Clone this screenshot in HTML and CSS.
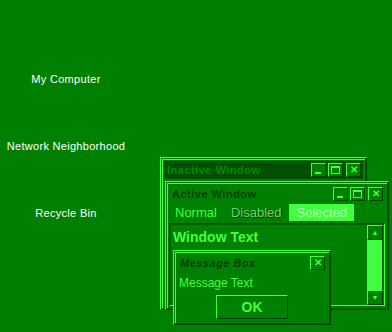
FILE: index.html
```html
<!DOCTYPE html>
<html lang="en">
<head>
    <meta charset="UTF-8">
    <title>Appearance</title>
    <link rel="stylesheet" href="styles.css">
</head>
<body>
    <div class="desktop">
        <!-- Iconos del escritorio -->
        <div class="icons">
            <div class="icon-label">My Computer</div>
            <div class="icon-label">Network Neighborhood</div>
            <div class="icon-label">Recycle Bin</div>
        </div>

        <!-- Ventana inactiva -->
        <div class="window inactive-window">
            <div class="title-bar inactive">
                <span class="title">Inactive Window</span>
                <div class="caption-buttons">
                    <span class="cap-btn min"><i></i></span>
                    <span class="cap-btn max"><i></i></span>
                    <span class="cap-btn close">&#x2715;</span>
                </div>
            </div>
        </div>

        <!-- Ventana activa -->
        <div class="window active-window">
            <div class="title-bar active">
                <span class="title">Active Window</span>
                <div class="caption-buttons">
                    <span class="cap-btn min"><i></i></span>
                    <span class="cap-btn max"><i></i></span>
                    <span class="cap-btn close">&#x2715;</span>
                </div>
            </div>
            <div class="menu">
                <span class="menu-item">Normal</span>
                <span class="menu-item disabled">Disabled</span>
                <span class="menu-item selected">Selected</span>
            </div>
            <div class="text-area">
                <div class="window-text">Window Text</div>
                <div class="scrollbar">
                    <span class="scroll-btn">&#x25B2;</span>
                    <span class="thumb"></span>
                    <span class="scroll-btn">&#x25BC;</span>
                </div>
            </div>
        </div>

        <!-- Caja de mensaje -->
        <div class="window message-box">
            <div class="title-bar msg">
                <span class="title">Message Box</span>
                <span class="cap-btn close">&#x2715;</span>
            </div>
            <div class="message-text">Message Text</div>
            <div class="ok-row">
                <button class="ok-button">OK</button>
            </div>
        </div>
    </div>
</body>
</html>
```

FILE: styles.css
```css
* {
    margin: 0;
    padding: 0;
    box-sizing: border-box;
}

body {
    width: 392px;
    height: 332px;
    overflow: hidden;
    background-color: #008000; /* Fondo verde */
    font-family: 'Liberation Sans', Arial, sans-serif;
    font-size: 11px;
}

.desktop {
    position: relative;
    width: 392px;
    height: 332px;
}

/* Iconos */
.icons {
    width: 132px;
    padding-top: 73px;
    display: flex;
    flex-direction: column;
    align-items: center;
    gap: 54px;
}

.icon-label {
    color: #ffffff;
    font-size: 11px;
    line-height: 13px;
    letter-spacing: 0.3px;
}

/* Ventanas */
.window {
    position: absolute;
    background-color: #008000;
    border: 1px solid;
    border-color: #40ff40 #004000 #004000 #40ff40;
    box-shadow: inset 1px 1px 0 #008000, inset -1px -1px 0 #006000, inset 2px 2px 0 #40ff40;
    padding: 3px;
}

.inactive-window {
    left: 160px;
    top: 157px;
    width: 207px;
    height: 153px;
}

.active-window {
    left: 165px;
    top: 181px;
    width: 224px;
    height: 129px;
    display: flex;
    flex-direction: column;
}

.message-box {
    left: 173px;
    top: 250px;
    width: 158px;
    height: 75px;
}

.title-bar {
    height: 18px;
    display: flex;
    align-items: center;
    justify-content: space-between;
    padding: 0 2px 0 3px;
}

.title {
    font-weight: bold;
    font-size: 11px;
    letter-spacing: 0.5px;
}

.title-bar.inactive {
    background-color: #005000;
}

.title-bar.inactive .title {
    color: #008800;
}

.title-bar.active .title,
.title-bar.msg .title {
    color: #004000;
}

.title-bar.msg .title {
    font-style: italic;
}

.caption-buttons {
    display: flex;
    gap: 2px;
}

.cap-btn {
    width: 15px;
    height: 14px;
    background-color: #008000;
    border: 1px solid;
    border-color: #40ff40 #004000 #004000 #40ff40;
    color: #40ff40;
    display: flex;
    align-items: center;
    justify-content: center;
    font-size: 10px;
    font-weight: bold;
    line-height: 1;
}

.cap-btn.close {
    margin-left: 1px;
}

.cap-btn.min i {
    width: 6px;
    height: 2px;
    background-color: #40ff40;
    margin-top: 6px;
    margin-right: 2px;
}

.cap-btn.max i {
    width: 9px;
    height: 8px;
    border: 1px solid #40ff40;
    border-top-width: 2px;
}

/* Menu */
.menu {
    display: flex;
    height: 18px;
    align-items: stretch;
    font-size: 13px;
    padding-top: 1px;
}

.menu-item {
    padding: 0 7px;
    display: flex;
    align-items: center;
    color: #40ff40;
}

.menu-item:first-child {
    padding-left: 6px;
}

.menu-item.disabled {
    color: #70d070;
    text-shadow: 1px 1px 0 #004000;
}

.menu-item.selected {
    background-color: #40ff40;
    color: #b0ffb0;
    padding: 0 7px 0 8px;
}

/* Area de texto */
.text-area {
    flex: 1;
    display: flex;
    margin-top: 2px;
    border: 1px solid;
    border-color: #004000 #40ff40 #40ff40 #004000;
    box-shadow: inset 1px 1px 0 #006000;
}

.window-text {
    flex: 1;
    color: #40ff40;
    font-weight: bold;
    font-size: 14px;
    padding: 5px 0 0 3px;
}

.scrollbar {
    width: 16px;
    display: flex;
    flex-direction: column;
    margin: 1px 1px 0 0;
}

.scroll-btn {
    height: 15px;
    background-color: #008000;
    border: 1px solid;
    border-color: #40ff40 #004000 #004000 #40ff40;
    color: #40ff40;
    font-size: 7px;
    display: flex;
    align-items: center;
    justify-content: center;
}

.thumb {
    flex: 1;
    background-color: #40ff40;
    border-right: 1px solid #006000;
}

/* Caja de mensaje */
.message-text {
    color: #40ff40;
    font-size: 12px;
    padding: 4px 0 0 2px;
}

.ok-row {
    display: flex;
    justify-content: center;
    padding-top: 5px;
}

.ok-button {
    width: 72px;
    height: 24px;
    background-color: #008000;
    border: 1px solid;
    border-color: #40ff40 #004000 #004000 #40ff40;
    color: #40ff40;
    font-family: 'Liberation Sans', Arial, sans-serif;
    font-weight: bold;
    font-size: 14px;
}
```
